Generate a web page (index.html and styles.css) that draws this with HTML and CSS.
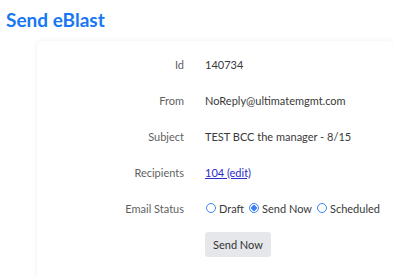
FILE: index.html
```html
<!DOCTYPE html>
<html lang="en-US">
<head>
  <title>Send eBlast</title>
  <meta charset="utf-8">
  <link rel="stylesheet" href="styles.css">
</head>
<body>
  <h1 class="page-title">Send eBlast</h1>

  <div class="card">
    <form class="form-grid">
      <div class="label">Id</div>
      <div class="value">140734</div>

      <div class="label">From</div>
      <div class="value">NoReply@ultimatemgmt.com</div>

      <div class="label">Subject</div>
      <div class="value">TEST BCC the manager - 8/15</div>

      <div class="label">Recipients</div>
      <div class="value"><a href="#" class="link">104 (edit)</a></div>

      <div class="label">Email Status</div>
      <div class="value radios">
        <label class="radio"><input type="radio" name="status" value="draft"> Draft</label>
        <label class="radio"><input type="radio" name="status" value="now" checked> Send Now</label>
        <label class="radio"><input type="radio" name="status" value="scheduled"> Scheduled</label>
      </div>

      <div class="label"></div>
      <div class="value"><button type="button" class="btn">Send Now</button></div>
    </form>
  </div>
</body>
</html>
```

FILE: styles.css
```css
body {
  margin: 0;
  background-color: #ffffff;
  color: #3a3a3a;
  font-family: Lato, "Open Sans", sans-serif;
  font-size: 11px;
}

.page-title {
  margin: 0;
  padding: 8px 6px 0;
  height: 33px;
  box-sizing: border-box;
  color: #1877f2;
  font-size: 19px;
  font-weight: bold;
}

.card {
  margin-left: 37px;
  margin-top: 8px;
  padding: 5px 0 20px;
  background-color: #ffffff;
  border-radius: 5px;
  box-shadow: 0 0 6px rgba(0, 0, 0, 0.07);
}

.form-grid {
  display: grid;
  grid-template-columns: 147px auto;
  column-gap: 21px;
  grid-auto-rows: 36px;
  align-items: center;
}

.label {
  text-align: right;
  color: #5f5f5f;
}

.link {
  color: #2b2bc8;
}

.radios {
  display: flex;
  gap: 4px;
}

.radio {
  display: flex;
  align-items: center;
  gap: 3px;
}

.radio input {
  appearance: none;
  margin: 0 0 1px 1px;
  width: 10px;
  height: 10px;
  border: 1px solid #3b82f6;
  border-radius: 50%;
  background-color: #ffffff;
}

.radio input:checked {
  background: radial-gradient(circle, #3b82f6 0 2.5px, #ffffff 3px);
}

.btn {
  margin-top: 1px;
  padding: 0 8px;
  height: 25px;
  border: none;
  border-radius: 3px;
  background-color: #e5e7eb;
  color: #333333;
  font-family: inherit;
  font-size: 11px;
}
```
